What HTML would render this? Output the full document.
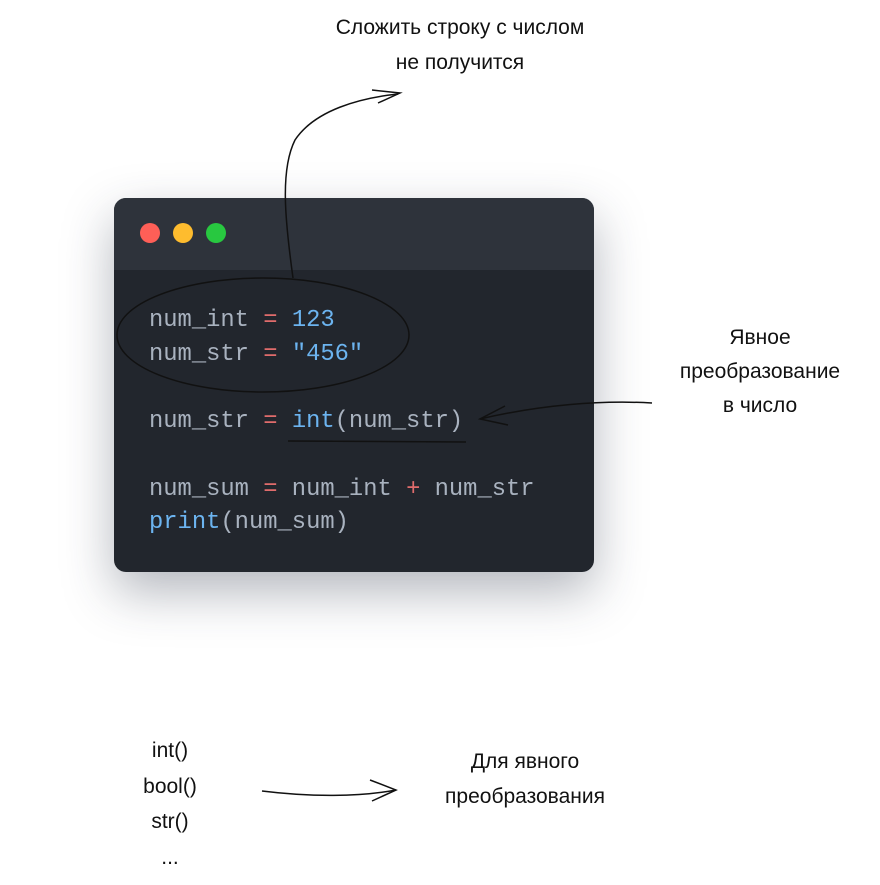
<!DOCTYPE html>
<html><head><meta charset="utf-8"><style>
body{margin:0;width:880px;height:885px;background:#fff;position:relative;overflow:hidden;font-family:"Liberation Sans","Noto Sans CJK SC",sans-serif}
.card{position:absolute;left:114px;top:198px;width:480px;height:374px;border-radius:12px;background:#22262d;box-shadow:0 20px 50px rgba(40,50,70,.35);overflow:hidden}
.hdr{height:72px;background:#2e333b}
.dot{position:absolute;top:25px;width:20px;height:20px;border-radius:50%}
pre{position:absolute;left:35px;top:106px;margin:0;font-family:"Liberation Mono","DejaVu Sans Mono",monospace;font-size:23.8px;line-height:33.7px;color:#a9b2bf}
.o{color:#e06c6c}.b{color:#6cb4f0}
.t{position:absolute;color:#111;font-size:21px;text-align:center;line-height:35px}
svg{position:absolute;left:0;top:0}
</style></head><body>
<div class="card"><div class="hdr"></div>
<div class="dot" style="left:26px;background:#fe5f57"></div>
<div class="dot" style="left:59px;background:#febc2e"></div>
<div class="dot" style="left:92px;background:#28c840"></div>
<pre>num_int <span class="o">=</span> <span class="b">123</span>
num_str <span class="o">=</span> <span class="b">"456"</span>

num_str <span class="o">=</span> <span class="b">int</span>(num_str)

num_sum <span class="o">=</span> num_int <span class="o">+</span> num_str
<span class="b">print</span>(num_sum)</pre>
</div>
<svg width="880" height="885" fill="none" stroke="#111" stroke-width="1.5">
<ellipse cx="263" cy="335" rx="146" ry="57"/>
<path d="M293 278 C285 220 280 170 295 140 C315 110 360 98 398 94"/>
<path d="M372 90 L400 93 L378 103"/>
<path d="M288 441 L466 442"/>
<path d="M652 403 C600 400 540 405 480 419"/>
<path d="M505 406 L480 419 L508 425"/>
<path d="M262 791 C310 797 360 797 396 790"/>
<path d="M370 780 L396 790 L372 801"/>
</svg>
<div class="t" style="left:270px;top:10px;width:380px">Сложить строку с числом<br>не получится</div>
<div class="t" style="left:650px;top:321px;width:220px;line-height:34px">Явное<br>преобразование<br>в число</div>
<div class="t" style="left:400px;top:744px;width:250px">Для явного<br>преобразования</div>
<div class="t" style="left:110px;top:733px;width:120px;line-height:35.5px">int()<br>bool()<br>str()<br>...</div>
</body></html>
